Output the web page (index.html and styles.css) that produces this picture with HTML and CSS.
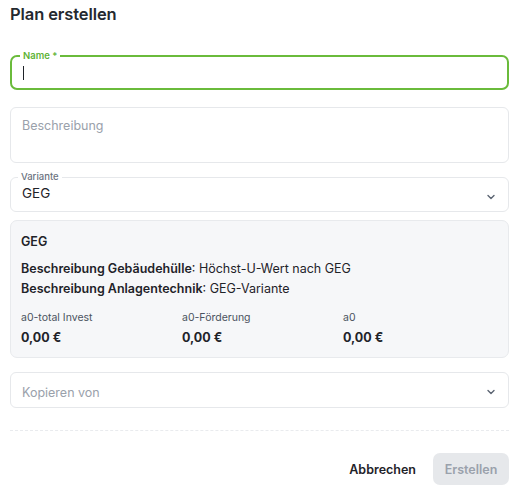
FILE: index.html
```html
<!DOCTYPE html>
<html lang="de">
<head>
<meta charset="utf-8">
<title>Plan erstellen</title>
<link rel="stylesheet" href="styles.css">
</head>
<body>
<div class="dialog">
  <h1 class="title">Plan erstellen</h1>

  <div class="form">
    <fieldset class="field field-focus">
      <legend class="legend">Name *</legend>
      <span class="caret"></span>
    </fieldset>

    <div class="field field-area">
      <span class="placeholder">Beschreibung</span>
    </div>

    <fieldset class="field field-select">
      <legend class="legend legend-muted">Variante</legend>
      <span class="value">GEG</span>
      <svg class="chevron" viewBox="0 0 12 12" width="12" height="12"><path d="M3 4.5 L6 7.5 L9 4.5" fill="none" stroke="#5b6472" stroke-width="1.4" stroke-linecap="round" stroke-linejoin="round"/></svg>
    </fieldset>

    <div class="card">
      <div class="card-title">GEG</div>
      <div class="card-lines">
        <div><b>Beschreibung Gebäudehülle</b>: Höchst-U-Wert nach GEG</div>
        <div><b>Beschreibung Anlagentechnik</b>: GEG-Variante</div>
      </div>
      <div class="stats">
        <div class="stat"><div class="stat-label">a0-total Invest</div><div class="stat-value">0,00 €</div></div>
        <div class="stat"><div class="stat-label">a0-Förderung</div><div class="stat-value">0,00 €</div></div>
        <div class="stat"><div class="stat-label">a0</div><div class="stat-value">0,00 €</div></div>
      </div>
    </div>

    <div class="field field-copy">
      <span class="placeholder">Kopieren von</span>
      <svg class="chevron" viewBox="0 0 12 12" width="12" height="12"><path d="M3 4.5 L6 7.5 L9 4.5" fill="none" stroke="#5b6472" stroke-width="1.4" stroke-linecap="round" stroke-linejoin="round"/></svg>
    </div>
  </div>

  <div class="divider"></div>

  <div class="actions">
    <button class="btn btn-text">Abbrechen</button>
    <button class="btn btn-disabled">Erstellen</button>
  </div>
</div>
</body>
</html>
```

FILE: styles.css
```css
* { box-sizing: border-box; }

body {
  margin: 0;
  background: #ffffff;
  font-family: Inter, "Noto Sans", sans-serif;
  color: #1f2329;
}

.dialog {
  width: 519px;
  padding: 0 10px;
}

.title {
  margin: 0;
  padding-top: 4px;
  height: 40px;
  font-size: 16.5px;
  font-weight: 600;
  line-height: 20px;
  color: #24292f;
  letter-spacing: -0.1px;
}

.form {
  display: flex;
  flex-direction: column;
}

.field {
  position: relative;
  margin: 0;
  border: 1px solid #e6e8eb;
  border-radius: 6px;
  background: #fff;
  min-width: 0;
}

fieldset.field {
  padding: 0 11px;
}

.legend {
  padding: 0 3px;
  margin-left: -4px;
  font-size: 9.5px;
  line-height: 10px;
  font-weight: 500;
  color: #5b6472;
}

.field-focus {
  margin-top: 11px;
  height: 39px;
  border: 2px solid #6abb3b;
  border-radius: 7px;
}

.field-focus .legend {
  color: #5fb336;
  font-weight: 600;
  margin-left: -3px;
}

.caret {
  display: block;
  width: 1px;
  height: 14px;
  margin-top: 5px;
  background: #1f2329;
}

.field-area {
  margin-top: 17px;
  height: 56px;
  padding: 6px 11px;
}

.placeholder {
  font-size: 12.5px;
  line-height: 16px;
  color: #9aa1ab;
}

.field-select {
  margin-top: 9px;
  height: 40px;
}

.legend-muted {
  color: #6b7280;
}

.value {
  display: block;
  font-size: 13.5px;
  line-height: 18px;
  margin-top: 2px;
  color: #1f2329;
}

.chevron {
  position: absolute;
  right: 11px;
  top: 50%;
  margin-top: -4px;
}

.field-select .chevron {
  margin-top: -1px;
}

.card {
  margin-top: 8px;
  height: 138px;
  border: 1px solid #e8eaed;
  border-radius: 7px;
  background: #f6f7f9;
  padding: 13px 10px 0;
  font-size: 12.5px;
  color: #1f2329;
}

.card-title {
  font-weight: 600;
  line-height: 16px;
}

.card-lines {
  margin-top: 11px;
  display: flex;
  flex-direction: column;
  gap: 4px;
  line-height: 16px;
}

.card-lines b {
  font-weight: 600;
}

.stats {
  margin-top: 14px;
  display: grid;
  grid-template-columns: 161px 161px 1fr;
}

.stat-label {
  font-size: 10.5px;
  line-height: 14px;
  color: #4b5360;
}

.stat-value {
  margin-top: 5px;
  font-weight: 700;
  font-size: 12.5px;
  line-height: 16px;
}

.field-copy {
  margin-top: 14px;
  height: 36px;
  padding: 8px 11px;
}

.divider {
  margin-top: 22px;
  border-top: 1px dashed #e9ebee;
}

.actions {
  display: flex;
  justify-content: flex-end;
  align-items: center;
  gap: 12px;
  margin-top: 22px;
}

.btn {
  font-family: inherit;
  font-size: 12.5px;
  font-weight: 600;
  border: none;
  border-radius: 7px;
  height: 32px;
  cursor: pointer;
}

.btn-text {
  background: transparent;
  color: #1f2329;
  padding: 0 5px;
}

.btn-disabled {
  width: 76px;
  background: #e6e8eb;
  color: #9aa1ab;
}
```
